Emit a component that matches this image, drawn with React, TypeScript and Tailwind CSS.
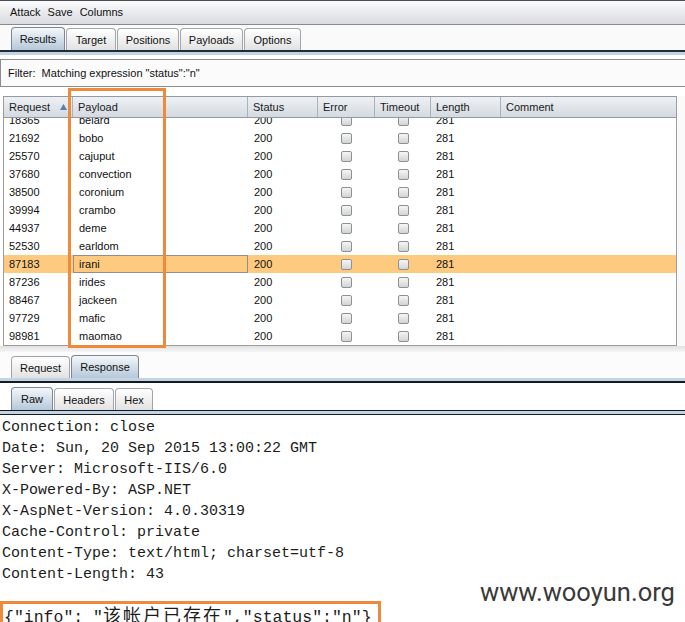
import React from "react";

const rows: [string, string][] = [
  ["18365", "belard"],
  ["21692", "bobo"],
  ["25570", "cajuput"],
  ["37680", "convection"],
  ["38500", "coronium"],
  ["39994", "crambo"],
  ["44937", "deme"],
  ["52530", "earldom"],
  ["87183", "irani"],
  ["87236", "irides"],
  ["88467", "jackeen"],
  ["97729", "mafic"],
  ["98981", "maomao"],
];

const responseLines = [
  "Connection: close",
  "Date: Sun, 20 Sep 2015 13:00:22 GMT",
  "Server: Microsoft-IIS/6.0",
  "X-Powered-By: ASP.NET",
  "X-AspNet-Version: 4.0.30319",
  "Cache-Control: private",
  "Content-Type: text/html; charset=utf-8",
  "Content-Length: 43",
];

function Tab({ label, className, selected }: { label: string; className: string; selected?: boolean }) {
  return (
    <div
      className={`${className} flex items-center justify-center rounded-t-[4px] border border-b-0 ${
        selected
          ? "h-[23px] border-[#7b8794] bg-gradient-to-b from-[#f4f7fa] to-[#b6c8d9]"
          : "h-[22px] border-[#a0a6ac] bg-gradient-to-b from-white to-[#e2e2e2]"
      }`}
    >
      <span className="pt-[1px]">{label}</span>
    </div>
  );
}

function Check() {
  return (
    <span className="inline-block h-[11px] w-[11px] rounded-[2px] border border-[#8e9092] bg-gradient-to-b from-[#f6f6f6] to-[#d2d4d6]" />
  );
}

export default function App() {
  return (
    <div className="relative h-[622px] w-[685px] overflow-hidden bg-white font-['Liberation_Sans',Arial,sans-serif] text-[11px] text-[#111]">
      {/* menu bar */}
      <div className="flex h-[25px] items-center gap-[7px] border-t border-b border-t-[#4a4d52] border-b-[#8a8a8a] bg-gradient-to-b from-[#fbfbfc] to-[#d9dae0] pl-[10px]">
        <span>Attack</span>
        <span>Save</span>
        <span>Columns</span>
      </div>

      {/* main tabs */}
      <div className="flex h-[25px] items-end gap-[1px] bg-[#fafafa] pl-[11px]">
        <Tab label="Results" className="w-[54px]" selected />
        <Tab label="Target" className="w-[50px]" />
        <Tab label="Positions" className="w-[62px]" />
        <Tab label="Payloads" className="w-[63px]" />
        <Tab label="Options" className="w-[57px]" />
      </div>
      <div className="h-[2px] bg-[#1d2b3a]" />
      <div className="h-[3px] bg-[#c4d3e2]" />
      <div className="h-[4px] bg-white" />

      {/* filter */}
      <div className="flex h-[28px] items-center border-y border-l border-[#8c8c8c] bg-[#fbfbfb] pl-[7px]">
        {"Filter:\u00a0 Matching expression \"status\":\"n\""}
      </div>

      <div className="h-[9px]" />

      {/* table */}
      <div className="flex">
        <div className="ml-[3px] w-[674px] border-x border-[#9d9d9d]">
          <div className="flex h-[22px] border-y border-[#939aa2] bg-gradient-to-b from-[#eef1f4] to-[#d4dae1] text-[#1a1a1a]">
            <div className="flex w-[69px] items-center justify-between border-r border-[#a9b1b9] pl-[5px] pr-[5px]">
              <span>Request</span>
              <svg width="7" height="6" viewBox="0 0 7 6">
                <polygon points="3.5,0 7,6 0,6" fill="#5a7ea8" />
              </svg>
            </div>
            <div className="flex w-[175px] items-center border-r border-[#a9b1b9] pl-[5px]">Payload</div>
            <div className="flex w-[70px] items-center border-r border-[#a9b1b9] pl-[5px]">Status</div>
            <div className="flex w-[57px] items-center border-r border-[#a9b1b9] pl-[5px]">Error</div>
            <div className="flex w-[56px] items-center border-r border-[#a9b1b9] pl-[5px]">Timeout</div>
            <div className="flex w-[70px] items-center border-r border-[#a9b1b9] pl-[5px]">Length</div>
            <div className="flex w-[175px] items-center pl-[5px]">Comment</div>
          </div>
          <div className="h-[228px] overflow-hidden border-b border-[#9d9d9d]">
            <div className="-mt-[7px]">
              {rows.map(([req, payload]) => {
                const hl = req === "87183";
                return (
                  <div key={req} className={`flex h-[18px] items-center ${hl ? "bg-[#fdca7f]" : ""}`}>
                    <div className="w-[69px] pl-[5px]">{req}</div>
                    <div
                      className={`flex h-[18px] w-[175px] items-center ${
                        hl ? "border border-[#8f8f8f] pl-[5px]" : "pl-[6px]"
                      }`}
                    >
                      {payload}
                    </div>
                    <div className="w-[70px] pl-[6px]">200</div>
                    <div className="flex w-[57px] justify-center">
                      <Check />
                    </div>
                    <div className="flex w-[56px] justify-center">
                      <Check />
                    </div>
                    <div className="w-[70px] pl-[5px]">281</div>
                    <div className="w-[175px]" />
                  </div>
                );
              })}
            </div>
          </div>
        </div>
        <div className="flex-1 bg-[#fafafa]" />
      </div>
      <div className="h-[6px] bg-gradient-to-b from-[#e2e2e2] to-[#f6f6f6]" />

      {/* request / response tabs */}
      <div className="flex h-[26px] items-end gap-[1px] bg-[#fcfcfc] pl-[11px]">
        <Tab label="Request" className="w-[59px]" />
        <Tab label="Response" className="w-[68px]" selected />
      </div>
      <div className="h-[3px] bg-[#c4d3e2]" />
      <div className="h-[2px] bg-[#111c28]" />
      <div className="h-[4px] bg-white" />

      <div className="flex h-[23px] items-end gap-[1px] pl-[11px]">
        <Tab label="Raw" className="w-[42px]" selected />
        <Tab label="Headers" className="w-[60px]" />
        <Tab label="Hex" className="w-[38px]" />
      </div>
      <div className="h-[1px] bg-[#111c28]" />
      <div className="h-[3px] bg-[#c4d3e2]" />
      <div className="h-[1px] bg-[#111c28]" />

      {/* response body */}
      <div className="whitespace-pre pl-[2px] pt-[2px] font-['Liberation_Mono','Noto_Sans_CJK_SC',monospace] text-[15px] leading-[21px] text-[#1c1c1c]">
        {responseLines.map((l) => (
          <div key={l}>{l}</div>
        ))}
        <div className="-ml-[2px] mt-[16px] w-[381px] border-[3px] border-[#ee8a3c] pl-[1px] text-[16.5px] leading-[21px]">
          {"{\"info\": \""}
          <span className="font-['Noto_Sans_CJK_SC',sans-serif] text-[18px] tracking-[2px]">该帐户已存在</span>
          {"\",\"status\":\"n\"}"}
        </div>
      </div>

      {/* payload highlight annotation */}
      <div className="absolute left-[68px] top-[88px] h-[260px] w-[98px] border-[3px] border-[#ee8a3c]" />

      {/* watermark */}
      <div className="absolute left-[480px] top-[580px] font-['Roboto',sans-serif] text-[25.5px] leading-[24px] text-[#3a3a3a]">
        www.wooyun.org
      </div>
    </div>
  );
}
